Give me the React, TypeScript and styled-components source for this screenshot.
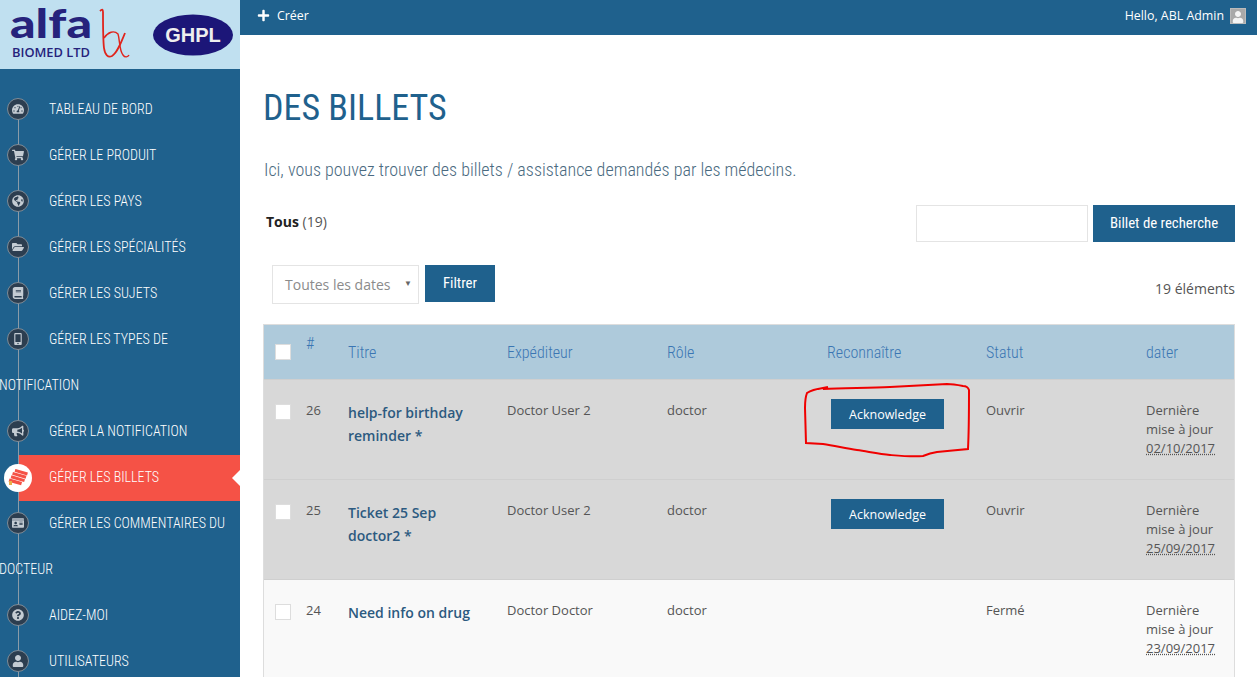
import React from "react";
import styled, { createGlobalStyle } from "styled-components";
import {
  FaBook,
  FaBullhorn,
  FaFolderOpen,
  FaGlobeAmericas,
  FaIdCard,
  FaMobileAlt,
  FaPlus,
  FaQuestionCircle,
  FaShoppingCart,
  FaTachometerAlt,
  FaUser,
} from "react-icons/fa";

const blue = "#1f618d";
const condensed = `"Roboto Condensed", "Roboto", sans-serif`;
const body = `"Open Sans", sans-serif`;

const GlobalStyle = createGlobalStyle`
  html, body {
    margin: 0;
    padding: 0;
    height: 100%;
    overflow: hidden;
    background: #ffffff;
    font-family: ${body};
  }
  * { box-sizing: border-box; }
`;

const Page = styled.div`
  display: grid;
  grid-template-columns: 240px 1fr;
  height: 677px;
  overflow: hidden;
  position: relative;
`;

const Sidebar = styled.aside`
  background: ${blue};
  height: 677px;
  overflow: hidden;
`;

const LogoBar = styled.div`
  height: 69px;
  background: #c0e0f0;
  display: flex;
  align-items: center;
  justify-content: space-between;
  padding: 0 7px 0 10px;
`;

const Nav = styled.nav`
  position: relative;
  padding-top: 17px;

  &::before {
    content: "";
    position: absolute;
    left: 18px;
    top: 40px;
    bottom: 0;
    width: 1px;
    background: #8a9ba8;
  }
`;

const NavRow = styled.div<{ $active?: boolean }>`
  position: relative;
  height: 46px;
  margin: ${(p) => (p.$active ? "1px 0 -1px 19px" : "0")};
  padding: ${(p) => (p.$active ? "0 0 2px 30px" : "0 0 0 49px")};
  display: flex;
  align-items: center;
  background: ${(p) => (p.$active ? "#f55246" : "transparent")};
  color: #ffffff;
  font-family: ${condensed};
  font-stretch: 75%;
  font-weight: 300;
  font-size: 14px;
  white-space: nowrap;

  ${(p) =>
    p.$active &&
    `&::after {
      content: "";
      position: absolute;
      right: 0;
      top: 15px;
      border: 8px solid transparent;
      border-right-color: #ffffff;
      border-left-width: 0;
    }`}
`;

const NavWrap = styled.div`
  height: 46px;
  margin-left: -1px;
  display: flex;
  align-items: center;
  color: #ffffff;
  font-family: ${condensed};
  font-stretch: 75%;
  font-weight: 300;
  font-size: 14px;
  white-space: nowrap;
  position: relative;
`;

const NavBubble = styled.span<{ $active?: boolean }>`
  position: absolute;
  left: ${(p) => (p.$active ? "-15px" : "7px")};
  top: ${(p) => (p.$active ? "9px" : "12px")};
  width: ${(p) => (p.$active ? "28px" : "22px")};
  height: ${(p) => (p.$active ? "28px" : "22px")};
  border-radius: 50%;
  display: flex;
  align-items: center;
  justify-content: center;
  background: ${(p) => (p.$active ? "#ffffff" : "#2c3e50")};
  border: ${(p) => (p.$active ? "none" : "1px solid #7f8c97")};
  color: ${(p) => (p.$active ? "#f55246" : "#c4ccd3")};
  font-size: 12px;
`;

const Main = styled.main`
  min-width: 0;
`;

const TopBar = styled.header`
  height: 35px;
  background: ${blue};
  color: #ffffff;
  display: flex;
  align-items: center;
  justify-content: space-between;
  padding: 0 11px 4px 17px;
  font-size: 12.4px;
`;

const CreateLink = styled.span`
  display: flex;
  align-items: center;
  gap: 7px;
`;

const Hello = styled.span`
  display: flex;
  align-items: center;
  gap: 6px;
`;

const Avatar = styled.span`
  width: 16px;
  height: 16px;
  background: #a9a9a9;
  border: 1px solid #bbbbbb;
  color: #f4f4f4;
  display: flex;
  align-items: flex-end;
  justify-content: center;
  font-size: 12px;
  overflow: hidden;
`;

const Content = styled.div`
  padding: 0 22px 0 23px;
`;

const Title = styled.h1`
  margin: 0;
  padding: 52px 0 0 0;
  height: 117px;
  color: ${blue};
  font-family: ${condensed};
  font-stretch: 75%;
  font-size: 36px;
  font-weight: 400;
  line-height: 42px;
`;

const Intro = styled.p`
  margin: 0;
  padding-left: 1px;
  height: 53px;
  color: #4a6a80;
  font-family: ${condensed};
  font-stretch: 75%;
  font-weight: 300;
  font-size: 18px;
  line-height: 36px;
`;

const SearchRow = styled.div`
  display: flex;
  justify-content: space-between;
  height: 37px;
  padding-left: 3px;
  font-size: 14px;
  color: #555555;

  b {
    color: #222222;
    font-weight: 700;
  }
`;

const AllCount = styled.span`
  padding-top: 7px;
`;

const SearchGroup = styled.div`
  display: flex;
  gap: 5px;
`;

const SearchInput = styled.div`
  width: 172px;
  height: 37px;
  border: 1px solid #e4e4e4;
`;

const SolidButton = styled.span<{ $w: number; $h: number }>`
  width: ${(p) => p.$w}px;
  height: ${(p) => p.$h}px;
  padding-bottom: 2px;
  background: ${blue};
  color: #ffffff;
  font-family: ${condensed};
  font-stretch: 75%;
  font-size: 14.8px;
  display: flex;
  align-items: center;
  justify-content: center;
`;

const FilterRow = styled.div`
  display: flex;
  align-items: flex-start;
  height: 38px;
  margin-top: 23px;
  padding-left: 9px;
  gap: 6px;
`;

const Select = styled.div`
  width: 147px;
  height: 39px;
  border: 1px solid #e4e4e4;
  color: #8b8b8b;
  font-size: 14px;
  display: flex;
  align-items: center;
  justify-content: space-between;
  padding: 0 6px 0 12px;

  i {
    font-style: normal;
    font-size: 8px;
    color: #666666;
    margin-bottom: 4px;
  }
`;

const Count = styled.span`
  margin-left: auto;
  color: #555555;
  font-size: 14px;
  padding-top: 14px;
`;

const Table = styled.div`
  margin-top: 21px;
  border: 1px solid #dddddd;
  border-bottom: 0;
`;

const Columns = styled.div`
  display: grid;
  grid-template-columns: 42px 42px 159px 160px 160px 159px 160px 1fr;
`;

const HeadRow = styled(Columns)`
  height: 54px;
  background: #aecadb;
  color: #3b76b3;
  font-family: ${condensed};
  font-stretch: 75%;
  font-weight: 300;
  font-size: 16px;
  align-items: center;
`;

const Hash = styled.span`
  align-self: start;
  padding-top: 9px;
`;

const Row = styled(Columns)<{ $open?: boolean }>`
  height: 100px;
  background: ${(p) => (p.$open ? "#d8d8d8" : "#f9f9f9")};
  border-top: 1px solid #cfcfcf;
  padding-top: 21px;
  font-size: 13px;
  line-height: 19px;
  color: #555555;
`;

const Check = styled.span<{ $head?: boolean }>`
  width: 16px;
  height: 16px;
  margin: ${(p) => (p.$head ? "0" : "3px")} 0 0 11px;
  background: #ffffff;
  border: 1px solid #dddddd;
`;

const TicketName = styled.span`
  color: #2c5a80;
  font-size: 14px;
  font-weight: 600;
  line-height: 23px;
  padding-right: 20px;
`;

const Ack = styled(SolidButton)`
  margin: -2px 0 0 4px;
  padding-bottom: 0;
  font-family: ${body};
  font-stretch: 100%;
  font-size: 12.5px;
`;

const Updated = styled.span`
  u {
    text-decoration: underline dotted;
  }
`;

const Scribble = styled.svg`
  position: absolute;
  left: 800px;
  top: 380px;
  pointer-events: none;
`;

const TicketsIcon = () => (
  <svg width="20" height="18" viewBox="0 0 20 18" fill="currentColor">
    <g transform="rotate(16 10 9)">
      <rect x="5" y="1" width="13" height="3" />
      <rect x="3.5" y="4.6" width="14" height="3" />
      <rect x="3" y="8.2" width="14" height="3" />
      <rect x="2" y="11.8" width="13" height="3.4" />
    </g>
    <rect x="1" y="12" width="3" height="4" fill="#e8b04a" />
  </svg>
);

type NavEntry = { label: string; icon: React.ReactNode; active?: boolean };

const navItems: NavEntry[] = [
  { label: "TABLEAU DE BORD", icon: <FaTachometerAlt /> },
  { label: "GÉRER LE PRODUIT", icon: <FaShoppingCart /> },
  { label: "GÉRER LES PAYS", icon: <FaGlobeAmericas /> },
  { label: "GÉRER LES SPÉCIALITÉS", icon: <FaFolderOpen /> },
  { label: "GÉRER LES SUJETS", icon: <FaBook /> },
  { label: "GÉRER LES TYPES DE", icon: <FaMobileAlt /> },
];

const navItemsAfter: NavEntry[] = [
  { label: "GÉRER LA NOTIFICATION", icon: <FaBullhorn /> },
  { label: "GÉRER LES BILLETS", icon: <TicketsIcon />, active: true },
  { label: "GÉRER LES COMMENTAIRES DU", icon: <FaIdCard /> },
];

const tickets = [
  { id: 26, title: "help-for birthday reminder *", from: "Doctor User 2", open: true, date: "02/10/2017" },
  { id: 25, title: "Ticket 25 Sep doctor2 *", from: "Doctor User 2", open: true, date: "25/09/2017" },
  { id: 24, title: "Need info on drug", from: "Doctor Doctor", open: false, date: "23/09/2017" },
];

const Logos = () => (
  <LogoBar>
    <svg width="125" height="69" viewBox="0 0 125 69">
      <text x="0" y="38" fontFamily="Lato, sans-serif" fontWeight="900" fontSize="39" fill="#26237c" textLength="82" lengthAdjust="spacingAndGlyphs">alfa</text>
      <text x="2" y="57" fontFamily="Open Sans, sans-serif" fontWeight="600" fontSize="13" fill="#26237c" textLength="78" lengthAdjust="spacingAndGlyphs">BIOMED LTD</text>
      <path d="M90 11C92 9 93 9 93 12C93 25 93 40 94 48C95 55 98 58 102 56C107 53 111 43 115 33" fill="none" stroke="#e0241c" strokeWidth="1.8" />
      <path d="M94 38C98 32 104 30 108 34C110 40 109 50 113 55C115 58 118 57 119 55" fill="none" stroke="#e0241c" strokeWidth="1.4" />
    </svg>
    <svg width="80" height="42" viewBox="0 0 80 42">
      <ellipse cx="40" cy="21" rx="40" ry="20.5" fill="#1c1678" />
      <text x="40" y="28" textAnchor="middle" fontFamily="Liberation Sans, sans-serif" fontWeight="700" fontSize="20" fill="#eeeeee">GHPL</text>
    </svg>
  </LogoBar>
);

const NavItem = ({ item }: { item: NavEntry }) => (
  <NavRow $active={item.active}>
    <NavBubble $active={item.active}>{item.icon}</NavBubble>
    {item.label}
  </NavRow>
);

const App = () => {
  return (
    <Page>
      <GlobalStyle />
      <Sidebar>
        <Logos />
        <Nav>
          {navItems.map((item) => (
            <NavItem key={item.label} item={item} />
          ))}
          <NavWrap>NOTIFICATION</NavWrap>
          {navItemsAfter.map((item) => (
            <NavItem key={item.label} item={item} />
          ))}
          <NavWrap>DOCTEUR</NavWrap>
          <NavItem item={{ label: "AIDEZ-MOI", icon: <FaQuestionCircle /> }} />
          <NavItem item={{ label: "UTILISATEURS", icon: <FaUser /> }} />
        </Nav>
      </Sidebar>
      <Main>
        <TopBar>
          <CreateLink>
            <FaPlus size={13} />
            Créer
          </CreateLink>
          <Hello>
            Hello, ABL Admin
            <Avatar>
              <FaUser />
            </Avatar>
          </Hello>
        </TopBar>
        <Content>
          <Title>DES BILLETS</Title>
          <Intro>Ici, vous pouvez trouver des billets / assistance demandés par les médecins.</Intro>
          <SearchRow>
            <AllCount>
              <b>Tous</b> (19)
            </AllCount>
            <SearchGroup>
              <SearchInput />
              <SolidButton $w={142} $h={37}>Billet de recherche</SolidButton>
            </SearchGroup>
          </SearchRow>
          <FilterRow>
            <Select>
              Toutes les dates <i>▼</i>
            </Select>
            <SolidButton $w={70} $h={37}>Filtrer</SolidButton>
            <Count>19 éléments</Count>
          </FilterRow>
          <Table>
            <HeadRow>
              <Check $head />
              <Hash>#</Hash>
              <span>Titre</span>
              <span>Expéditeur</span>
              <span>Rôle</span>
              <span>Reconnaître</span>
              <span>Statut</span>
              <span>dater</span>
            </HeadRow>
            {tickets.map((t) => (
              <Row key={t.id} $open={t.open}>
                <Check />
                <span>{t.id}</span>
                <TicketName>{t.title}</TicketName>
                <span>{t.from}</span>
                <span>doctor</span>
                <span>{t.open && <Ack $w={113} $h={30}>Acknowledge</Ack>}</span>
                <span>{t.open ? "Ouvrir" : "Fermé"}</span>
                <Updated>
                  Dernière
                  <br />
                  mise à jour
                  <br />
                  <u>{t.date}</u>
                </Updated>
              </Row>
            ))}
          </Table>
        </Content>
      </Main>
      <Scribble width="180" height="85" viewBox="0 0 180 85">
        <path
          d="M18 9 L28 7 L23 8 C16 9 10 11 7 13 C5 18 5 23 5 28 L6 63 L23 64 C35 66 45 68 57 70 C70 72 80 74 90 75 C102 76 113 77 123 76 C128 74 131 73 137 72 C147 71 158 70 168 69 C169 50 169 30 169 10 C168 7 166 6 163 6 C158 5 152 4 147 4 C130 5 110 6 90 7 C70 8 45 8 23 9"
          fill="none"
          stroke="#f00000"
          strokeWidth="2"
        />
      </Scribble>
    </Page>
  );
};

export default App;
